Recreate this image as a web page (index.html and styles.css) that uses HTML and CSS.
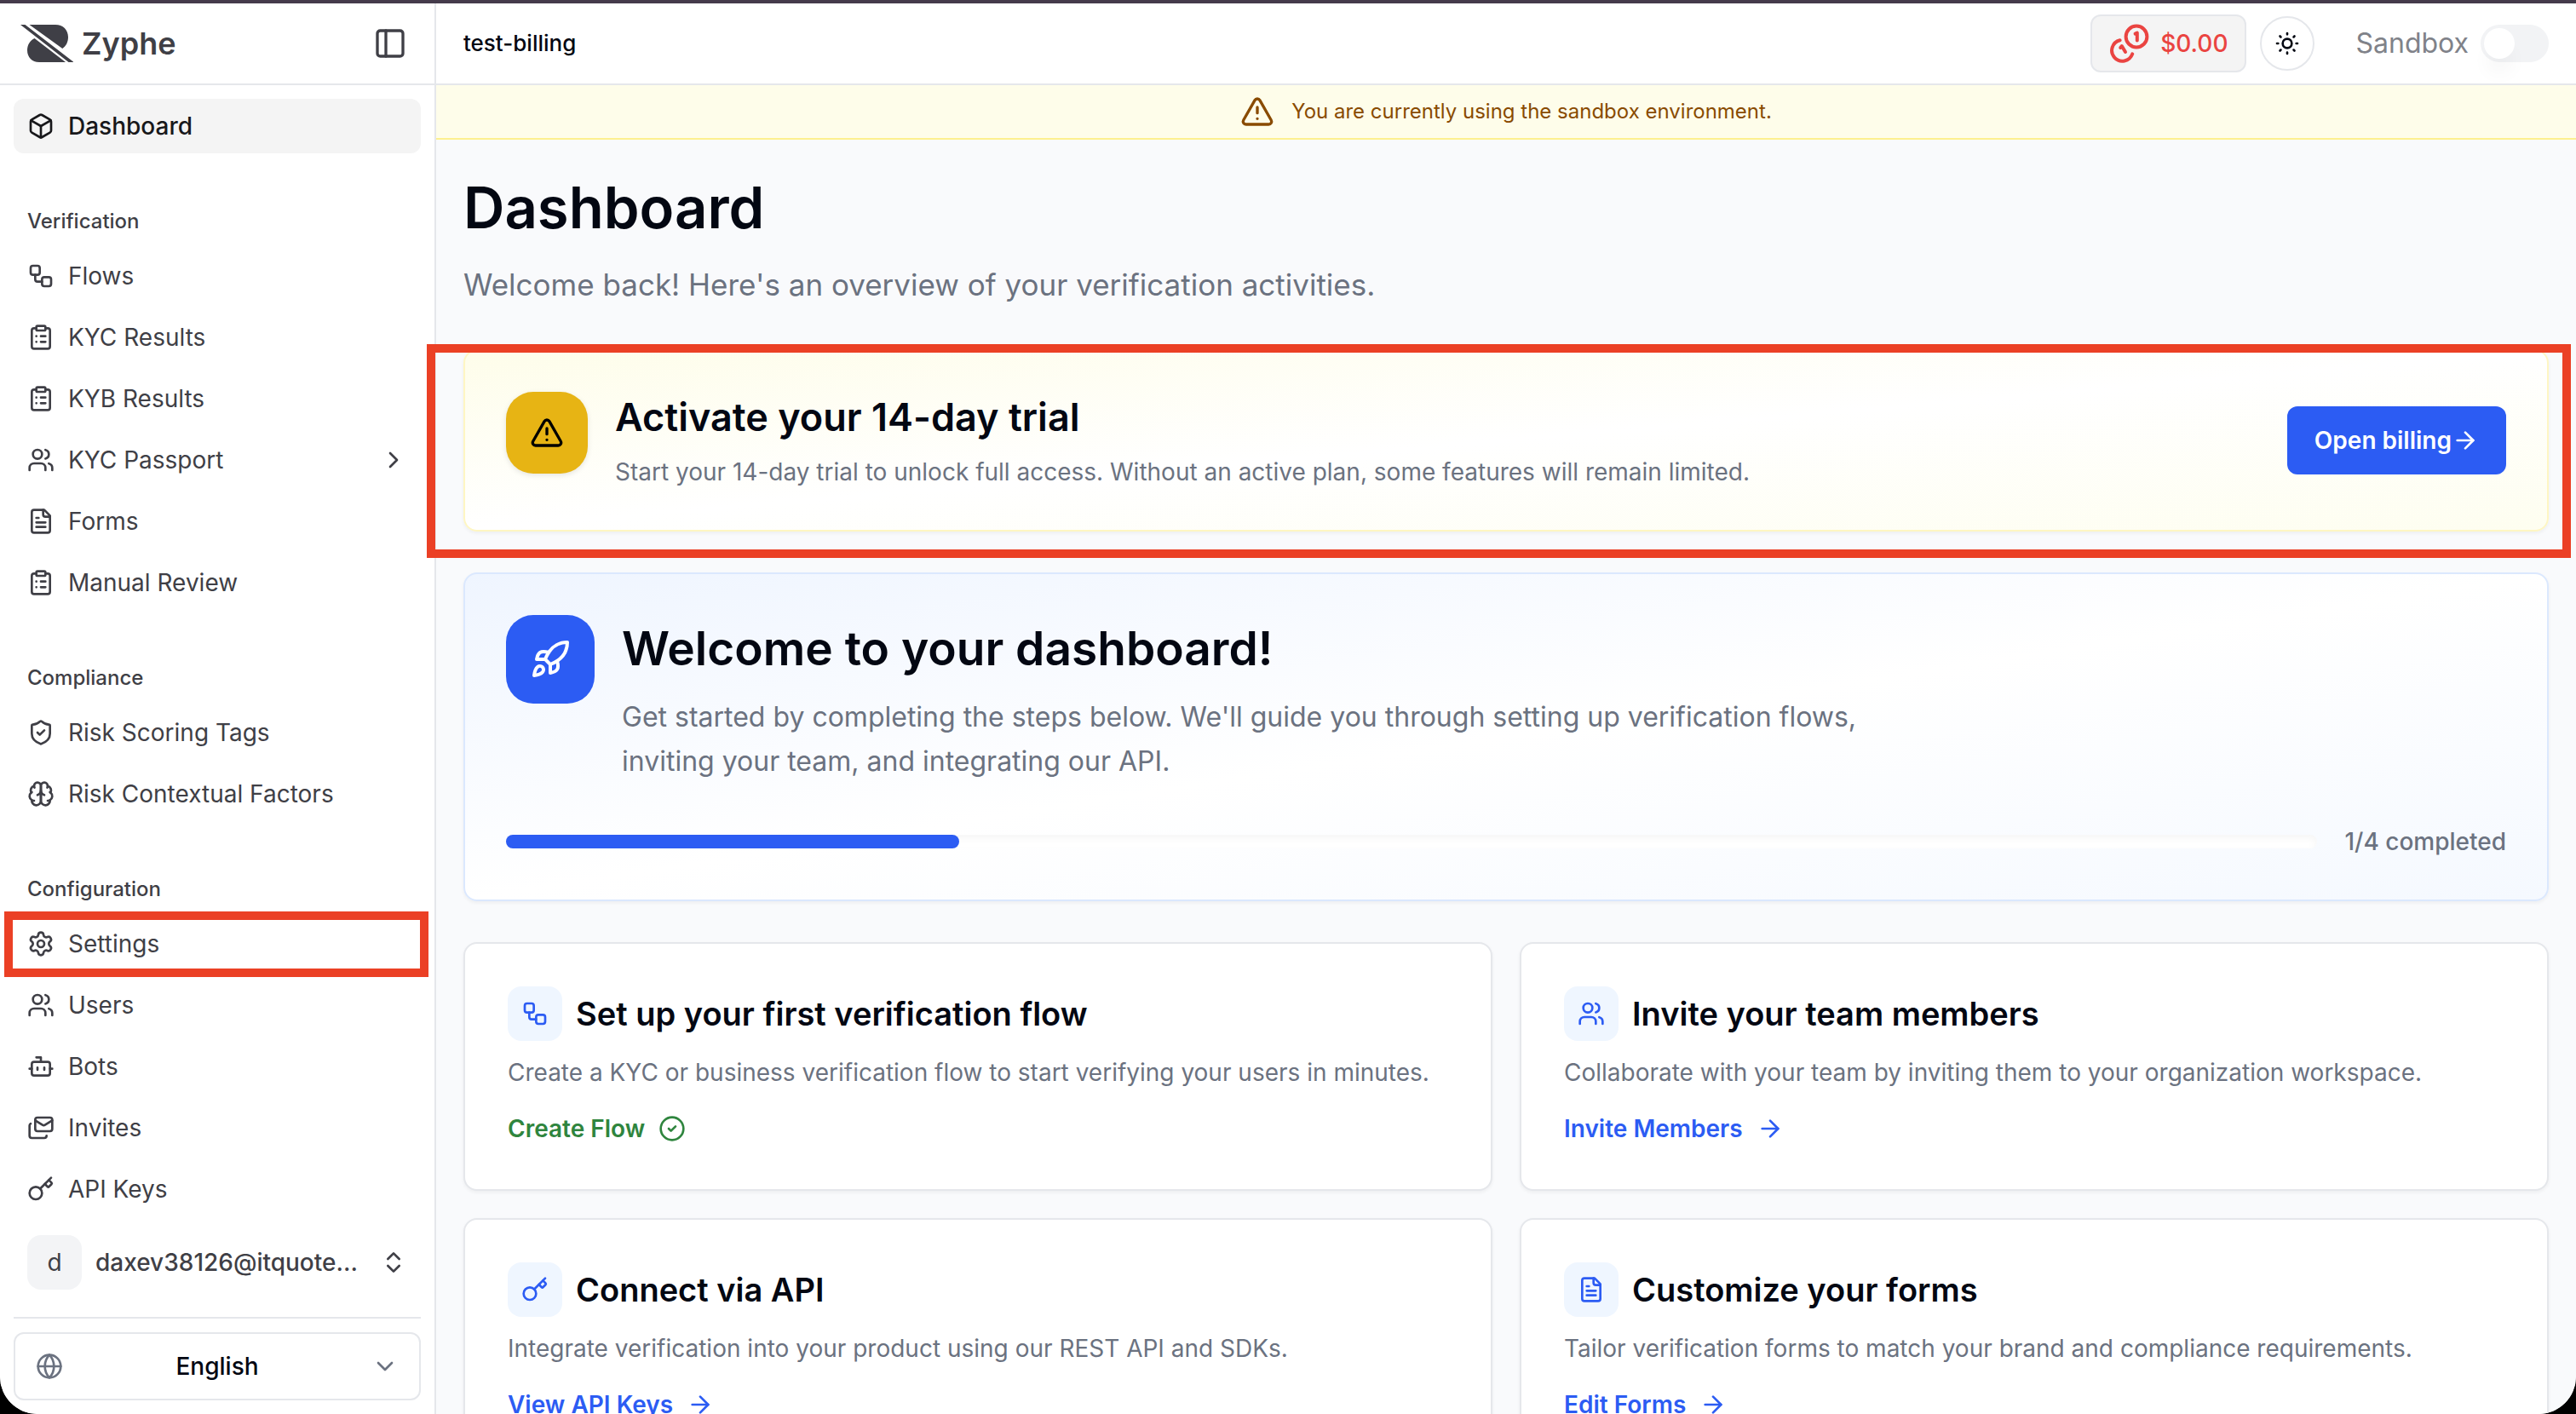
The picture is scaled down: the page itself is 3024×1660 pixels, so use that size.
FILE: index.html
```html
<!DOCTYPE html>
<html lang="en">
<head>
<meta charset="utf-8">
<title>Dashboard – Zyphe</title>
<link rel="stylesheet" href="styles.css">
</head>
<body>
<svg class="sprite" aria-hidden="true">
  <symbol id="i-box" viewBox="0 0 24 24"><path d="M21 8a2 2 0 0 0-1-1.73l-7-4a2 2 0 0 0-2 0l-7 4A2 2 0 0 0 3 8v8a2 2 0 0 0 1 1.73l7 4a2 2 0 0 0 2 0l7-4A2 2 0 0 0 21 16Z"/><path d="m3.3 7 8.7 5 8.7-5"/><path d="M12 22V12"/></symbol>
  <symbol id="i-workflow" viewBox="0 0 24 24"><rect width="8" height="8" x="3" y="3" rx="2"/><path d="M7 11v4a2 2 0 0 0 2 2h4"/><rect width="8" height="8" x="13" y="13" rx="2"/></symbol>
  <symbol id="i-clipboard" viewBox="0 0 24 24"><rect width="8" height="4" x="8" y="2" rx="1"/><path d="M16 4h2a2 2 0 0 1 2 2v14a2 2 0 0 1-2 2H6a2 2 0 0 1-2-2V6a2 2 0 0 1 2-2h2"/><path d="M12 11h4M12 16h4M8 11h.01M8 16h.01"/></symbol>
  <symbol id="i-users" viewBox="0 0 24 24"><path d="M16 21v-2a4 4 0 0 0-4-4H6a4 4 0 0 0-4 4v2"/><circle cx="9" cy="7" r="4"/><path d="M22 21v-2a4 4 0 0 0-3-3.87"/><path d="M16 3.13a4 4 0 0 1 0 7.75"/></symbol>
  <symbol id="i-file" viewBox="0 0 24 24"><path d="M15 2H6a2 2 0 0 0-2 2v16a2 2 0 0 0 2 2h12a2 2 0 0 0 2-2V7Z"/><path d="M14 2v4a2 2 0 0 0 2 2h4"/><path d="M10 9H8M16 13H8M16 17H8"/></symbol>
  <symbol id="i-shield" viewBox="0 0 24 24"><path d="M20 13c0 5-3.5 7.5-7.66 8.95a1 1 0 0 1-.67-.01C7.5 20.5 4 18 4 13V6a1 1 0 0 1 1-1c2 0 4.5-1.2 6.24-2.72a1.17 1.17 0 0 1 1.52 0C14.51 3.81 17 5 19 5a1 1 0 0 1 1 1z"/><path d="m9 12 2 2 4-4"/></symbol>
  <symbol id="i-brain" viewBox="0 0 24 24"><path d="M12 5a3 3 0 1 0-5.997.125 4 4 0 0 0-2.526 5.77 4 4 0 0 0 .556 6.588A4 4 0 1 0 12 18Z"/><path d="M12 5a3 3 0 1 1 5.997.125 4 4 0 0 1 2.526 5.77 4 4 0 0 1-.556 6.588A4 4 0 1 1 12 18Z"/><path d="M15 13a4.5 4.5 0 0 1-3-4 4.5 4.5 0 0 1-3 4"/><path d="M17.599 6.5a3 3 0 0 0 .399-1.375M6.003 5.125A3 3 0 0 0 6.401 6.5M3.477 10.896a4 4 0 0 1 .585-.396M19.938 10.5a4 4 0 0 1 .585.396M6 18a4 4 0 0 1-1.967-.516M19.967 17.484A4 4 0 0 1 18 18"/></symbol>
  <symbol id="i-settings" viewBox="0 0 24 24"><path d="M9.671 4.136a2.34 2.34 0 0 1 4.659 0 2.34 2.34 0 0 0 3.319 1.915 2.34 2.34 0 0 1 2.33 4.033 2.34 2.34 0 0 0 0 3.831 2.34 2.34 0 0 1-2.33 4.033 2.34 2.34 0 0 0-3.319 1.915 2.34 2.34 0 0 1-4.659 0 2.34 2.34 0 0 0-3.32-1.915 2.34 2.34 0 0 1-2.33-4.033 2.34 2.34 0 0 0 0-3.831A2.34 2.34 0 0 1 6.35 6.051a2.34 2.34 0 0 0 3.319-1.915"/><circle cx="12" cy="12" r="3"/></symbol>
  <symbol id="i-bot" viewBox="0 0 24 24"><path d="M12 8V4H8"/><rect width="16" height="12" x="4" y="8" rx="2"/><path d="M2 14h2M20 14h2M15 13v2M9 13v2"/></symbol>
  <symbol id="i-mails" viewBox="0 0 24 24"><path d="M17 19a2 2 0 0 1-2 2H4a2 2 0 0 1-2-2v-9a2 2 0 0 1 1-1.7"/><path d="m22 5.5-6.4 4a2 2 0 0 1-2.2 0L7 5.5"/><rect x="7" y="3" width="15" height="12" rx="2"/></symbol>
  <symbol id="i-key" viewBox="0 0 24 24"><path d="m15.5 7.5 2.3 2.3a1 1 0 0 0 1.4 0l2.1-2.1a1 1 0 0 0 0-1.4L19 4"/><path d="m21 2-9.6 9.6"/><circle cx="7.5" cy="15.5" r="5.5"/></symbol>
  <symbol id="i-right" viewBox="0 0 24 24"><path d="m9 18 6-6-6-6"/></symbol>
  <symbol id="i-down" viewBox="0 0 24 24"><path d="m6 9 6 6 6-6"/></symbol>
  <symbol id="i-updown" viewBox="0 0 24 24"><path d="m7 15 5 5 5-5"/><path d="m7 9 5-5 5 5"/></symbol>
  <symbol id="i-globe" viewBox="0 0 24 24"><circle cx="12" cy="12" r="10"/><path d="M12 2a14.5 14.5 0 0 0 0 20 14.5 14.5 0 0 0 0-20"/><path d="M2 12h20"/></symbol>
  <symbol id="i-panel" viewBox="0 0 24 24"><rect width="18" height="18" x="3" y="3" rx="2"/><path d="M9 3v18"/></symbol>
  <symbol id="i-sun" viewBox="0 0 24 24"><circle cx="12" cy="12" r="4"/><path d="M12 3v1M12 20v1M3 12h1M20 12h1M18.364 5.636l-.707.707M6.343 17.657l-.707.707M5.636 5.636l.707.707M17.657 17.657l.707.707"/></symbol>
  <symbol id="i-alert" viewBox="0 0 24 24"><path d="m21.73 18-8-14a2 2 0 0 0-3.48 0l-8 14A2 2 0 0 0 4 21h16a2 2 0 0 0 1.73-3"/><path d="M12 9v4M12 17h.01"/></symbol>
  <symbol id="i-rocket" viewBox="0 0 24 24"><path d="M4.5 16.5c-1.5 1.26-2 5-2 5s3.74-.5 5-2c.71-.84.7-2.13-.09-2.91a2.18 2.18 0 0 0-2.91-.09z"/><path d="m12 15-3-3a22 22 0 0 1 2-3.95A12.88 12.88 0 0 1 22 2c0 2.72-.78 7.5-6 11a22.35 22.35 0 0 1-4 2z"/><path d="M9 12H4s.55-3.03 2-4c1.62-1.08 5 0 5 0"/><path d="M12 15v5s3.03-.55 4-2c1.08-1.62 0-5 0-5"/></symbol>
  <symbol id="i-check" viewBox="0 0 24 24"><circle cx="12" cy="12" r="10"/><path d="m9 12 2 2 4-4"/></symbol>
  <symbol id="i-arrow" viewBox="0 0 24 24"><path d="M5 12h14"/><path d="m12 5 7 7-7 7"/></symbol>
  <symbol id="i-coins" viewBox="0 0 48 48"><circle cx="32" cy="16" r="12.4"/><path d="M12.6 20.2A12.4 12.4 0 1 0 27.2 36.4"/><path d="M30.6 12.6l2.2-1v8.8"/><path d="M13.2 29l1.6-2 4.2 7"/></symbol>
</svg>

<div class="app">
  <aside class="sidebar">
    <div class="brand">
      <a class="brand-link" href="#">
        <svg class="brand-mark" viewBox="0 0 62 44" aria-hidden="true"><path d="M0 0h5.5L62.500 44h-6zM10.500 0H41c9 0 15 6 15 14.500 0 6-2.500 10.500-6.700 13.500zM16.500 16 53 44H22C13.500 44 8 38 8 30c0-6.500 3.500-11.500 8.500-14z"/></svg>
        <span class="brand-name">Zyphe</span>
      </a>
      <button class="icon-button" type="button" aria-label="Toggle sidebar"><svg class="icon icon-md"><use href="#i-panel"/></svg></button>
    </div>

    <nav class="nav">
      <a class="nav-item active" href="#"><svg class="icon"><use href="#i-box"/></svg>Dashboard</a>

      <section class="nav-group">
        <h2 class="nav-label">Verification</h2>
        <a class="nav-item" href="#"><svg class="icon"><use href="#i-workflow"/></svg>Flows</a>
        <a class="nav-item" href="#"><svg class="icon"><use href="#i-clipboard"/></svg>KYC Results</a>
        <a class="nav-item" href="#"><svg class="icon"><use href="#i-clipboard"/></svg>KYB Results</a>
        <button class="nav-item" type="button"><svg class="icon"><use href="#i-users"/></svg>KYC Passport<svg class="icon push"><use href="#i-right"/></svg></button>
        <a class="nav-item" href="#"><svg class="icon"><use href="#i-file"/></svg>Forms</a>
        <a class="nav-item" href="#"><svg class="icon"><use href="#i-clipboard"/></svg>Manual Review</a>
      </section>

      <section class="nav-group">
        <h2 class="nav-label">Compliance</h2>
        <a class="nav-item" href="#"><svg class="icon"><use href="#i-shield"/></svg>Risk Scoring Tags</a>
        <a class="nav-item" href="#"><svg class="icon"><use href="#i-brain"/></svg>Risk Contextual Factors</a>
      </section>

      <section class="nav-group">
        <h2 class="nav-label">Configuration</h2>
        <a class="nav-item marked" href="#"><svg class="icon"><use href="#i-settings"/></svg>Settings</a>
        <a class="nav-item" href="#"><svg class="icon"><use href="#i-users"/></svg>Users</a>
        <a class="nav-item" href="#"><svg class="icon"><use href="#i-bot"/></svg>Bots</a>
        <a class="nav-item" href="#"><svg class="icon"><use href="#i-mails"/></svg>Invites</a>
        <a class="nav-item" href="#"><svg class="icon"><use href="#i-key"/></svg>API Keys</a>
      </section>
    </nav>

    <div class="sidebar-footer">
      <button class="account" type="button">
        <span class="avatar">d</span>
        <span class="account-name">daxev38126@itquote...</span>
        <svg class="icon push"><use href="#i-updown"/></svg>
      </button>
      <div class="language">
        <svg class="icon language-globe"><use href="#i-globe"/></svg>
        <select class="language-select" aria-label="Language"><option>English</option></select>
        <svg class="icon language-arrow"><use href="#i-down"/></svg>
      </div>
    </div>
  </aside>

  <div class="content">
    <header class="topbar">
      <span class="org">test-billing</span>
      <div class="topbar-actions">
        <button class="balance" type="button"><svg class="coins"><use href="#i-coins"/></svg>$0.00</button>
        <button class="theme" type="button" aria-label="Toggle theme"><svg class="icon"><use href="#i-sun"/></svg></button>
        <label class="sandbox">Sandbox<input class="switch" type="checkbox" role="switch"></label>
      </div>
    </header>

    <div class="notice" role="status"><svg class="icon icon-md"><use href="#i-alert"/></svg>You are currently using the sandbox environment.</div>

    <main class="page">
      <h1 class="page-title">Dashboard</h1>
      <p class="page-lead">Welcome back! Here's an overview of your verification activities.</p>

      <section class="card trial">
        <span class="trial-icon"><svg class="icon icon-md"><use href="#i-alert"/></svg></span>
        <div class="trial-text">
          <h2 class="trial-title">Activate your 14-day trial</h2>
          <p class="trial-desc">Start your 14-day trial to unlock full access. Without an active plan, some features will remain limited.</p>
        </div>
        <button class="primary" type="button">Open billing<svg class="icon"><use href="#i-arrow"/></svg></button>
      </section>

      <section class="card welcome">
        <div class="welcome-head">
          <span class="welcome-icon"><svg class="icon icon-lg"><use href="#i-rocket"/></svg></span>
          <div>
            <h2 class="welcome-title">Welcome to your dashboard!</h2>
            <p class="welcome-desc">Get started by completing the steps below. We'll guide you through setting up verification flows, inviting your team, and integrating our API.</p>
          </div>
        </div>
        <div class="progress">
          <div class="progress-track" role="progressbar" aria-label="Setup steps" aria-valuemin="0" aria-valuemax="4" aria-valuenow="1"><div class="progress-bar" style="width: 25%"></div></div>
          <span class="progress-label">1/4 completed</span>
        </div>
      </section>

      <div class="steps">
        <article class="card step">
          <div class="step-head"><span class="step-icon"><svg class="icon"><use href="#i-workflow"/></svg></span><h3 class="step-title">Set up your first verification flow</h3></div>
          <p class="step-desc">Create a KYC or business verification flow to start verifying your users in minutes.</p>
          <a class="step-link done" href="#">Create Flow<svg class="icon"><use href="#i-check"/></svg></a>
        </article>
        <article class="card step">
          <div class="step-head"><span class="step-icon"><svg class="icon"><use href="#i-users"/></svg></span><h3 class="step-title">Invite your team members</h3></div>
          <p class="step-desc">Collaborate with your team by inviting them to your organization workspace.</p>
          <a class="step-link" href="#">Invite Members<svg class="icon"><use href="#i-arrow"/></svg></a>
        </article>
        <article class="card step">
          <div class="step-head"><span class="step-icon"><svg class="icon"><use href="#i-key"/></svg></span><h3 class="step-title">Connect via API</h3></div>
          <p class="step-desc">Integrate verification into your product using our REST API and SDKs.</p>
          <a class="step-link" href="#">View API Keys<svg class="icon"><use href="#i-arrow"/></svg></a>
        </article>
        <article class="card step">
          <div class="step-head"><span class="step-icon"><svg class="icon"><use href="#i-file"/></svg></span><h3 class="step-title">Customize your forms</h3></div>
          <p class="step-desc">Tailor verification forms to match your brand and compliance requirements.</p>
          <a class="step-link" href="#">Edit Forms<svg class="icon"><use href="#i-arrow"/></svg></a>
        </article>
      </div>
    </main>
  </div>
</div>
</body>
</html>
```
FILE: styles.css
```css
:root {
  --ink: #030712;
  --muted: #6b7280;
  --side: #3f3f46;
  --line: #e5e7eb;
  --blue: #2c5cf3;
  --mark: #eb4025;
}

*, *::before, *::after { box-sizing: border-box; }

html { background: #000; }

body {
  margin: 0;
  font-family: Inter, "Liberation Sans", sans-serif;
  font-size: 28px;
  line-height: 40px;
  color: var(--ink);
}

h1, h2, h3, p { margin: 0; }

a { color: inherit; text-decoration: none; }

button {
  font: inherit;
  color: inherit;
  background: none;
  border: 0;
  padding: 0;
  cursor: pointer;
}

.sprite { display: none; }

.icon {
  width: 32px;
  height: 32px;
  flex: none;
  fill: none;
  stroke: currentColor;
  stroke-width: 2;
  stroke-linecap: round;
  stroke-linejoin: round;
}
.icon-md { width: 40px; height: 40px; }
.icon-lg { width: 48px; height: 48px; }
.push { margin-left: auto; }

/* Shell */
.app {
  display: flex;
  height: 100vh;
  overflow: hidden;
  border-top: 4px solid #453b4b;
  border-radius: 0 0 44px 44px;
  background: #fff;
}

.sidebar {
  display: flex;
  flex-direction: column;
  flex: none;
  width: 512px;
  border-right: 2px solid var(--line);
  color: var(--side);
}

.content {
  display: flex;
  flex-direction: column;
  flex: 1;
  min-width: 0;
  background: #f9fafc;
}

/* Sidebar */
.brand {
  display: flex;
  align-items: center;
  justify-content: space-between;
  flex: none;
  height: 96px;
  padding: 0 32px 0 24px;
  border-bottom: 2px solid var(--line);
}
.brand-link { display: flex; align-items: center; gap: 10px; }
.brand-mark { width: 62px; height: 44px; fill: var(--side); }
.brand-name { font-size: 36px; line-height: 44px; font-weight: 600; }
.icon-button { display: flex; }

.nav {
  flex: 1;
  min-height: 0;
  padding: 16px;
  display: flex;
  flex-direction: column;
  gap: 48px;
}
.nav-group { display: flex; flex-direction: column; }
.nav-label {
  font-size: 24px;
  font-weight: 500;
  line-height: 64px;
  padding: 0 16px;
}
.nav-item {
  position: relative;
  display: flex;
  align-items: center;
  gap: 16px;
  flex: none;
  height: 64px;
  padding: 0 16px;
  border-radius: 12px;
}
.nav-item + .nav-item { margin-top: 8px; }
.nav-item.active { background: #f4f4f4; color: #18181b; font-weight: 500; }

.marked::after, .trial::after {
  content: "";
  position: absolute;
  border: 10px solid var(--mark);
  pointer-events: none;
}
.marked::after { inset: -6px -9px -7px -11px; }

.sidebar-footer { flex: none; padding: 0 16px 16px; background: #fff; }
.account {
  display: flex;
  align-items: center;
  gap: 16px;
  width: 100%;
  height: 80px;
  padding: 0 16px;
  margin-bottom: 24px;
  text-align: left;
}
.avatar {
  display: grid;
  place-items: center;
  width: 64px;
  height: 64px;
  border-radius: 16px;
  background: #f3f4f6;
}
.account-name { font-weight: 500; }
.language {
  position: relative;
  border-top: 2px solid var(--line);
  padding-top: 16px;
}
.language-select {
  display: block;
  width: 100%;
  height: 80px;
  padding: 0 72px;
  appearance: none;
  border: 2px solid var(--line);
  border-radius: 12px;
  background: #fff;
  color: var(--ink);
  font: inherit;
  font-weight: 500;
  text-align: center;
  text-align-last: center;
}
.language-globe, .language-arrow {
  position: absolute;
  bottom: 24px;
  color: var(--muted);
  pointer-events: none;
}
.language-globe { left: 26px; }
.language-arrow { right: 26px; }

/* Top bar */
.topbar {
  display: flex;
  align-items: center;
  justify-content: space-between;
  flex: none;
  height: 96px;
  padding: 0 32px;
  border-bottom: 2px solid var(--line);
  background: #fff;
}
.org { font-size: 26px; font-weight: 500; }
.topbar-actions { display: flex; align-items: center; gap: 16px; }
.balance {
  display: flex;
  align-items: center;
  gap: 12px;
  height: 68px;
  padding: 0 20px;
  border: 2px solid var(--line);
  border-radius: 12px;
  background: #f4f4f4;
  color: #ea4441;
  font-weight: 500;
}
.coins {
  width: 48px;
  height: 48px;
  fill: none;
  stroke: currentColor;
  stroke-width: 4;
  stroke-linecap: round;
  stroke-linejoin: round;
}
.theme {
  display: grid;
  place-items: center;
  width: 64px;
  height: 64px;
  border: 2px solid var(--line);
  border-radius: 50%;
}
.sandbox {
  display: flex;
  align-items: center;
  gap: 14px;
  margin-left: 32px;
  font-size: 32px;
  color: #808289;
}
.switch {
  appearance: none;
  display: flex;
  align-items: center;
  width: 80px;
  height: 44px;
  margin: 0;
  padding: 4px;
  border-radius: 22px;
  background: #f2f3f5;
}
.switch::before {
  content: "";
  width: 36px;
  height: 36px;
  border-radius: 50%;
  background: #fff;
  box-shadow: 0 20px 24px -6px rgba(0, 0, 0, 0.06);
}
.switch:checked { background: var(--blue); }
.switch:checked::before { margin-left: auto; }

.notice {
  display: flex;
  align-items: center;
  justify-content: center;
  gap: 20px;
  flex: none;
  height: 64px;
  border-bottom: 2px solid #fdf08f;
  background: #fefdea;
  color: #894b00;
  font-size: 24px;
}

/* Page: the scroll area reaches 11px over the sidebar so that the
   outline round the trial card is not clipped */
.page {
  position: relative;
  flex: 1;
  min-height: 0;
  margin-left: -11px;
  overflow-y: auto;
  scrollbar-width: none;
  padding: 40px 32px 40px 43px;
}
.page-title { font-size: 67px; line-height: 80px; font-weight: 600; }
.page-lead { margin: 22px 0 48px; font-size: 35px; line-height: 56px; color: var(--muted); }

.card {
  position: relative;
  border: 2px solid var(--line);
  border-radius: 16px;
  background: #fff;
  box-shadow: 0 2px 4px rgba(0, 0, 0, 0.05);
}

.trial {
  display: flex;
  align-items: center;
  gap: 32px;
  padding: 48px;
  border-color: #fef6c3;
  background: linear-gradient(to bottom right, #fefdea, #fff, #fefef0);
}
.trial::after { inset: -8px -28px -33px -45px; }
.trial-icon {
  display: grid;
  place-items: center;
  align-self: flex-start;
  width: 96px;
  height: 96px;
  border-radius: 32px;
  background: #e7b414;
  color: #000;
  box-shadow: 0 2px 6px rgba(0, 0, 0, 0.1);
}
.trial-text { flex: 1; }
.trial-title { font-size: 45px; line-height: 60px; font-weight: 600; }
.trial-desc { margin-top: 14px; color: var(--muted); }
.primary {
  display: flex;
  align-items: center;
  height: 80px;
  padding: 0 32px;
  border-radius: 12px;
  background: var(--blue);
  color: #fff;
  font-weight: 600;
}

.welcome {
  margin-top: 48px;
  padding: 48px;
  border-color: #dbe8fe;
  background: linear-gradient(to bottom right, #eff5ff, #fff, #f5f9ff);
}
.welcome-head { display: flex; gap: 32px; }
.welcome-icon {
  display: grid;
  place-items: center;
  flex: none;
  width: 104px;
  height: 104px;
  border-radius: 32px;
  background: var(--blue);
  color: #fff;
}
.welcome-title { font-size: 55px; line-height: 78px; font-weight: 600; }
.welcome-desc {
  max-width: 1536px;
  margin-top: 16px;
  font-size: 32px;
  line-height: 52px;
  color: var(--muted);
}
.progress { display: flex; align-items: center; gap: 32px; margin-top: 48px; }
.progress-track {
  flex: 1;
  height: 16px;
  border-radius: 8px;
  background: #fff;
  box-shadow: inset 0 4px 8px rgba(0, 0, 0, 0.04);
}
.progress-bar { height: 100%; border-radius: 8px; background: var(--blue); }
.progress-label { font-weight: 500; color: var(--muted); }

.steps {
  display: grid;
  grid-template-columns: repeat(2, minmax(0, 1fr));
  gap: 32px;
  margin-top: 48px;
}
.step { padding: 50px; }
.step-head { display: flex; align-items: center; gap: 16px; }
.step-icon {
  display: grid;
  place-items: center;
  width: 64px;
  height: 64px;
  border-radius: 16px;
  background: #eff6ff;
  color: var(--blue);
}
.step-title { font-size: 38px; line-height: 56px; font-weight: 600; }
.step-desc { margin-top: 16px; line-height: 42px; color: var(--muted); }
.step-link {
  display: inline-flex;
  align-items: center;
  gap: 16px;
  margin-top: 24px;
  line-height: 42px;
  vertical-align: top;
  font-weight: 600;
  color: var(--blue);
}
.step-link.done { color: #2f853e; }
```
